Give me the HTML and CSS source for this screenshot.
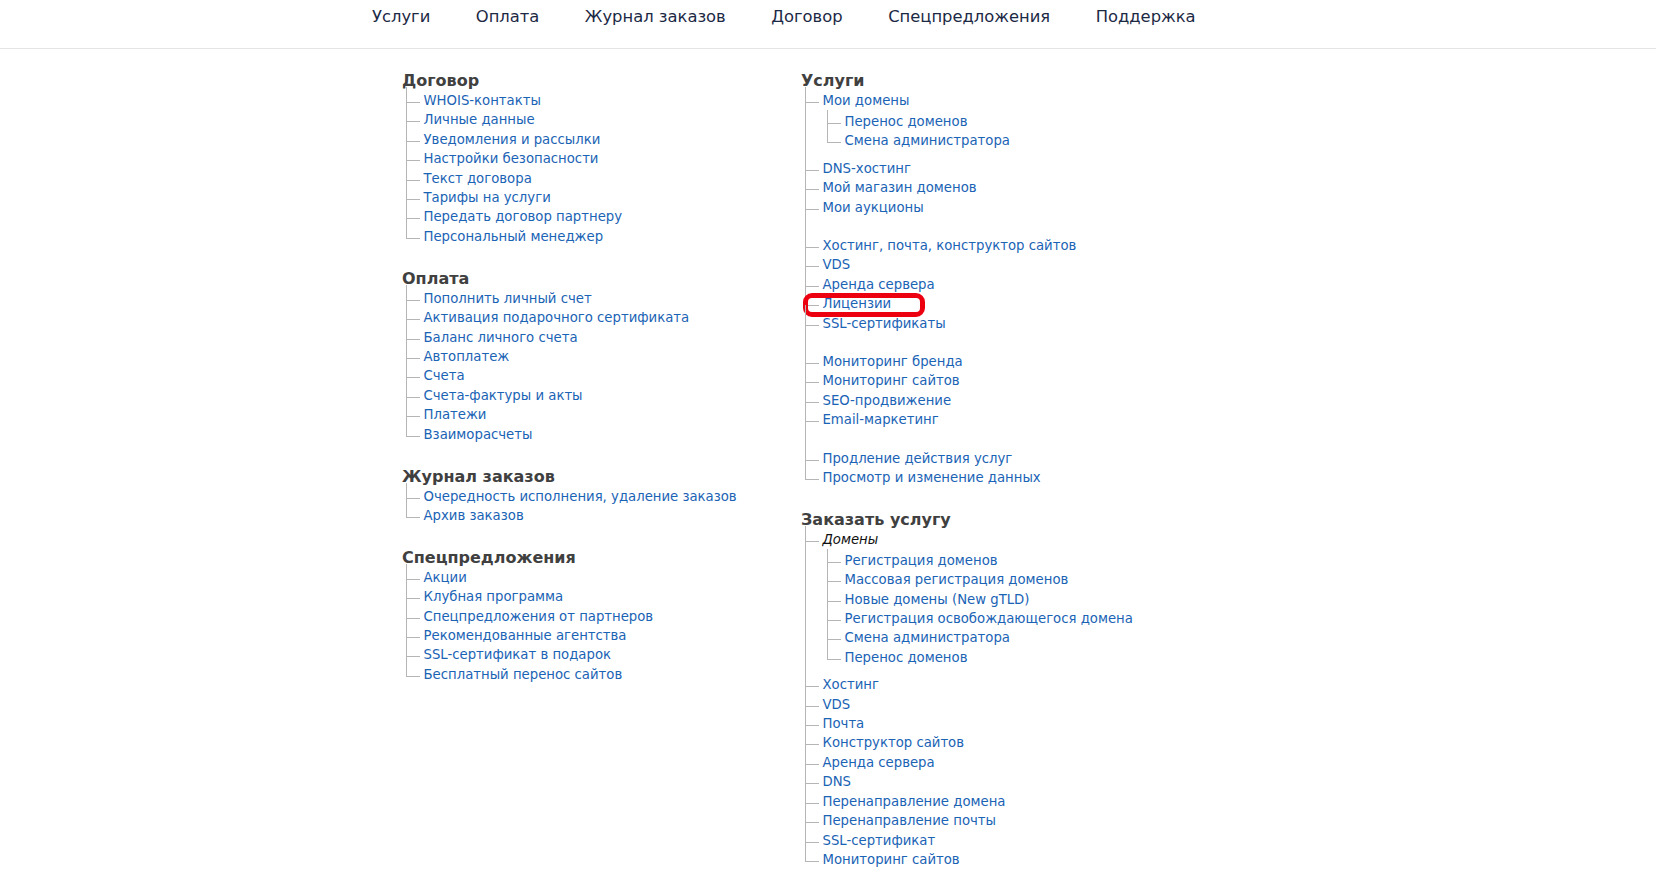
FILE: index.html
```html
<!DOCTYPE html>
<html lang="ru">
<head>
<meta charset="utf-8">
<title>Карта сайта</title>
<link rel="stylesheet" href="styles.css">
</head>
<body>
<header class="topbar">
  <div class="page">
    <nav class="mainnav">
      <a href="#">Услуги</a>
      <a href="#">Оплата</a>
      <a href="#">Журнал заказов</a>
      <a href="#">Договор</a>
      <a href="#">Спецпредложения</a>
      <a href="#">Поддержка</a>
    </nav>
  </div>
</header>
<main class="page">
  <div class="columns">
    <div class="col">
      <section class="group">
        <h2>Договор</h2>
        <ul class="tree">
          <li><a href="#">WHOIS-контакты</a></li>
          <li><a href="#">Личные данные</a></li>
          <li><a href="#">Уведомления и рассылки</a></li>
          <li><a href="#">Настройки безопасности</a></li>
          <li><a href="#">Текст договора</a></li>
          <li><a href="#">Тарифы на услуги</a></li>
          <li><a href="#">Передать договор партнеру</a></li>
          <li><a href="#">Персональный менеджер</a></li>
        </ul>
      </section>
      <section class="group">
        <h2>Оплата</h2>
        <ul class="tree">
          <li><a href="#">Пополнить личный счет</a></li>
          <li><a href="#">Активация подарочного сертификата</a></li>
          <li><a href="#">Баланс личного счета</a></li>
          <li><a href="#">Автоплатеж</a></li>
          <li><a href="#">Счета</a></li>
          <li><a href="#">Счета-фактуры и акты</a></li>
          <li><a href="#">Платежи</a></li>
          <li><a href="#">Взаиморасчеты</a></li>
        </ul>
      </section>
      <section class="group">
        <h2>Журнал заказов</h2>
        <ul class="tree">
          <li><a href="#">Очередность исполнения, удаление заказов</a></li>
          <li><a href="#">Архив заказов</a></li>
        </ul>
      </section>
      <section class="group">
        <h2>Спецпредложения</h2>
        <ul class="tree">
          <li><a href="#">Акции</a></li>
          <li><a href="#">Клубная программа</a></li>
          <li><a href="#">Спецпредложения от партнеров</a></li>
          <li><a href="#">Рекомендованные агентства</a></li>
          <li><a href="#">SSL-сертификат в подарок</a></li>
          <li><a href="#">Бесплатный перенос сайтов</a></li>
        </ul>
      </section>
    </div>
    <div class="col">
      <section class="group">
        <h2>Услуги</h2>
        <ul class="tree">
          <li><a href="#">Мои домены</a>
            <ul class="tree sub">
              <li><a href="#">Перенос доменов</a></li>
              <li><a href="#">Смена администратора</a></li>
            </ul>
          </li>
          <li><a href="#">DNS-хостинг</a></li>
          <li><a href="#">Мой магазин доменов</a></li>
          <li><a href="#">Мои аукционы</a></li>
          <li class="blank"></li>
          <li><a href="#">Хостинг, почта, конструктор сайтов</a></li>
          <li><a href="#">VDS</a></li>
          <li><a href="#">Аренда сервера</a></li>
          <li><a href="#">Лицензии</a><span class="highlight"></span></li>
          <li><a href="#">SSL-сертификаты</a></li>
          <li class="blank"></li>
          <li><a href="#">Мониторинг бренда</a></li>
          <li><a href="#">Мониторинг сайтов</a></li>
          <li><a href="#">SEO-продвижение</a></li>
          <li><a href="#">Email-маркетинг</a></li>
          <li class="blank"></li>
          <li><a href="#">Продление действия услуг</a></li>
          <li><a href="#">Просмотр и изменение данных</a></li>
        </ul>
      </section>
      <section class="group">
        <h2>Заказать услугу</h2>
        <ul class="tree">
          <li><span class="label">Домены</span>
            <ul class="tree sub">
              <li><a href="#">Регистрация доменов</a></li>
              <li><a href="#">Массовая регистрация доменов</a></li>
              <li><a href="#">Новые домены (New gTLD)</a></li>
              <li><a href="#">Регистрация освобождающегося домена</a></li>
              <li><a href="#">Смена администратора</a></li>
              <li><a href="#">Перенос доменов</a></li>
            </ul>
          </li>
          <li><a href="#">Хостинг</a></li>
          <li><a href="#">VDS</a></li>
          <li><a href="#">Почта</a></li>
          <li><a href="#">Конструктор сайтов</a></li>
          <li><a href="#">Аренда сервера</a></li>
          <li><a href="#">DNS</a></li>
          <li><a href="#">Перенаправление домена</a></li>
          <li><a href="#">Перенаправление почты</a></li>
          <li><a href="#">SSL-сертификат</a></li>
          <li><a href="#">Мониторинг сайтов</a></li>
        </ul>
      </section>
    </div>
  </div>
</main>
</body>
</html>
```
FILE: styles.css
```css
html, body {
  margin: 0;
  padding: 0;
  background: #ffffff;
}

body {
  font-family: "DejaVu Sans", Verdana, sans-serif;
  color: #222;
  overflow: hidden;
}

.page {
  width: 1000px;
  margin: 0 auto;
}

.topbar {
  height: 48px;
  border-bottom: 1px solid #e4e4e4;
}

.mainnav {
  display: flex;
  gap: 45.5px;
  padding: 6px 0 0 44px;
}

.mainnav a {
  font-size: 16.35px;
  line-height: 22px;
  color: #1c2945;
  text-decoration: none;
}

.columns {
  display: flex;
  padding: 21px 0 0 74px;
}

.col {
  width: 399px;
}

.group + .group {
  margin-top: 21.5px;
}

.group h2 {
  margin: 0;
  font-size: 16px;
  line-height: 21px;
  font-weight: bold;
  color: #404040;
}

.tree {
  list-style: none;
  margin: 0 0 0 3.5px;
  padding: 0;
}

.tree li {
  position: relative;
  padding-left: 18px;
  font-size: 13.25px;
  line-height: 19.4px;
}

.tree li::before {
  content: "";
  position: absolute;
  left: 0;
  top: 0;
  width: 13px;
  height: 11px;
  border-left: 1px solid #b5b5b5;
  border-bottom: 1px solid #b5b5b5;
}

.tree > li:first-child::before {
  top: -4px;
  height: 15px;
}

.tree li::after {
  content: "";
  position: absolute;
  left: 0;
  top: 11px;
  bottom: 0;
  border-left: 1px solid #b5b5b5;
}

.tree > li:last-child::after {
  display: none;
}

.tree li.blank {
  height: 19px;
}

.tree li.blank::before {
  height: auto;
  bottom: 0;
  border-bottom: none;
}

.tree li.blank::after {
  display: none;
}

.tree.sub {
  margin: 0 0 0 4px;
  padding: 1.5px 0 8px;
}

.tree.sub > li:first-child::before {
  top: -2px;
  height: 13px;
}

.tree a {
  color: #1a63b5;
  text-decoration: none;
}

.tree .label {
  font-style: italic;
  color: #111;
}

.highlight {
  position: absolute;
  left: -1.5px;
  top: -1px;
  width: 122px;
  height: 23.5px;
  box-sizing: border-box;
  border: 5px solid #ec0010;
  border-radius: 9px;
  pointer-events: none;
}
```
